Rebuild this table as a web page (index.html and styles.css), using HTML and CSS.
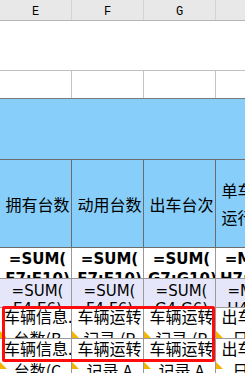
FILE: index.html
```html
<!DOCTYPE html>
<html>
<head>
<meta charset="utf-8">
<link rel="stylesheet" href="styles.css">
</head>
<body>
<div class="sheet">
  <div class="row colhdr">
    <div class="cell"><span>E</span></div>
    <div class="cell"><span>F</span></div>
    <div class="cell"><span>G</span></div>
    <div class="cell"><span>H</span></div>
  </div>
  <div class="row r1"></div>
  <div class="row r2">
    <div class="cell"></div><div class="cell"></div><div class="cell"></div><div class="cell"></div>
  </div>
  <div class="row blue"></div>
  <div class="row thead">
    <div class="cell"><span>拥有台数</span></div>
    <div class="cell"><span>动用台数</span></div>
    <div class="cell"><span>出车台次</span></div>
    <div class="cell two"><span>单车平均</span><span>运行里程</span></div>
  </div>
  <div class="row bold">
    <div class="cell"><span>=SUM(</span><span>E7:E10)</span></div>
    <div class="cell"><span>=SUM(</span><span>F7:F10)</span></div>
    <div class="cell"><span>=SUM(</span><span>G7:G10)</span></div>
    <div class="cell"><span>=MAX(</span><span>H7:H10)</span></div>
  </div>
  <div class="row lav">
    <div class="cell"><span>=SUM(</span><span>E4:E6)</span></div>
    <div class="cell"><span>=SUM(</span><span>F4:F6)</span></div>
    <div class="cell"><span>=SUM(</span><span>G4:G6)</span></div>
    <div class="cell"><span>=MAX(</span><span>H4:H6)</span></div>
  </div>
  <div class="row data d3">
    <div class="cell tri"><span>车辆信息.</span><span>台数(B</span></div>
    <div class="cell tri"><span>车辆运转</span><span>记录.(P</span></div>
    <div class="cell tri"><span>车辆运转</span><span>记录.(P</span></div>
    <div class="cell tri"><span>出车记录</span><span>日志.(</span></div>
  </div>
  <div class="row data d4">
    <div class="cell tri"><span>车辆信息.</span><span>台数(C</span></div>
    <div class="cell tri"><span>车辆运转</span><span>记录.A</span></div>
    <div class="cell tri"><span>车辆运转</span><span>记录.A</span></div>
    <div class="cell tri"><span>出车记录</span><span>日志.(</span></div>
  </div>
  <div class="redbox"></div>
</div>
</body>
</html>
```

FILE: styles.css
```css
html, body {
  margin: 0;
  padding: 0;
  overflow: hidden;
  background: #ffffff;
}

.sheet {
  width: 245px;
  height: 373px;
  overflow: hidden;
  position: relative;
  color: #000;
  font-family: "Noto Sans CJK SC", "Noto Sans", sans-serif;
}

.row {
  display: grid;
  grid-template-columns: repeat(4, 72px);
  width: 288px;
  box-sizing: border-box;
  border-bottom: 1px solid #c0c0c0;
}

.cell {
  box-sizing: border-box;
  border-right: 1px solid #c0c0c0;
  overflow: hidden;
  padding-left: 4px;
  display: flex;
  flex-direction: column;
  position: relative;
}

.cell > span {
  display: block;
  text-align: center;
  white-space: nowrap;
}

/* column letters */
.colhdr {
  height: 21px;
  background: #e8e8e8;
  border-bottom-color: #b4b4b4;
}
.colhdr .cell {
  border-right-color: #d4d4d4;
  padding-left: 0;
  padding-top: 5px;
  font-family: "Liberation Mono", monospace;
  font-size: 12px;
  line-height: 15px;
}

.r1 {
  height: 50px;
  border-bottom-color: #c0c0c0;
}

.r2 {
  height: 28px;
  border-bottom-color: #7c7c7c;
}
.r2 .cell {
  border-right-color: #c4c4c4;
}

.blue {
  height: 61px;
  background: #87cefa;
  border-bottom-color: #6c6c6c;
}

.thead {
  height: 88px;
  background: #87cefa;
  border-bottom-color: #6c6c6c;
}
.thead .cell {
  border-right-color: #6c6c6c;
  justify-content: center;
  font-size: 16px;
  line-height: 16px;
}
.thead .cell.two {
  gap: 11px;
}

.bold {
  height: 31px;
  border-bottom-color: #9a9a9a;
}
.bold .cell {
  border-right-color: #9a9a9a;
  padding-top: 1px;
  font-family: "DejaVu Sans", sans-serif;
  font-weight: bold;
  font-size: 15px;
  line-height: 20px;
}

.lav {
  height: 29px;
  background: #e6e6fa;
  border-bottom-color: #9a9a9a;
}
.lav .cell {
  border-right-color: #9a9a9a;
  padding-top: 3px;
  font-family: "DejaVu Sans", sans-serif;
  font-size: 15px;
  line-height: 18px;
}

.data .cell {
  border-right-color: #9a9a9a;
  font-size: 16px;
  line-height: 22px;
}
.d3 {
  height: 31px;
  border-bottom-color: #9a9a9a;
}
.d3 .cell > span:first-child {
  margin-top: -3px;
}
.d4 {
  height: 40px;
  border-bottom-color: #9a9a9a;
}
.d4 .cell > span:first-child {
  margin-top: -2px;
}

.cell.tri::after {
  content: "";
  position: absolute;
  left: 0;
  top: 23px;
  width: 0;
  height: 0;
  border-bottom: 7px solid #f5b400;
  border-right: 7px solid transparent;
}

.redbox {
  position: absolute;
  left: 2px;
  top: 306px;
  width: 213px;
  height: 56px;
  box-sizing: border-box;
  border: 3px solid #ff0d0d;
  border-radius: 2px;
}
```
